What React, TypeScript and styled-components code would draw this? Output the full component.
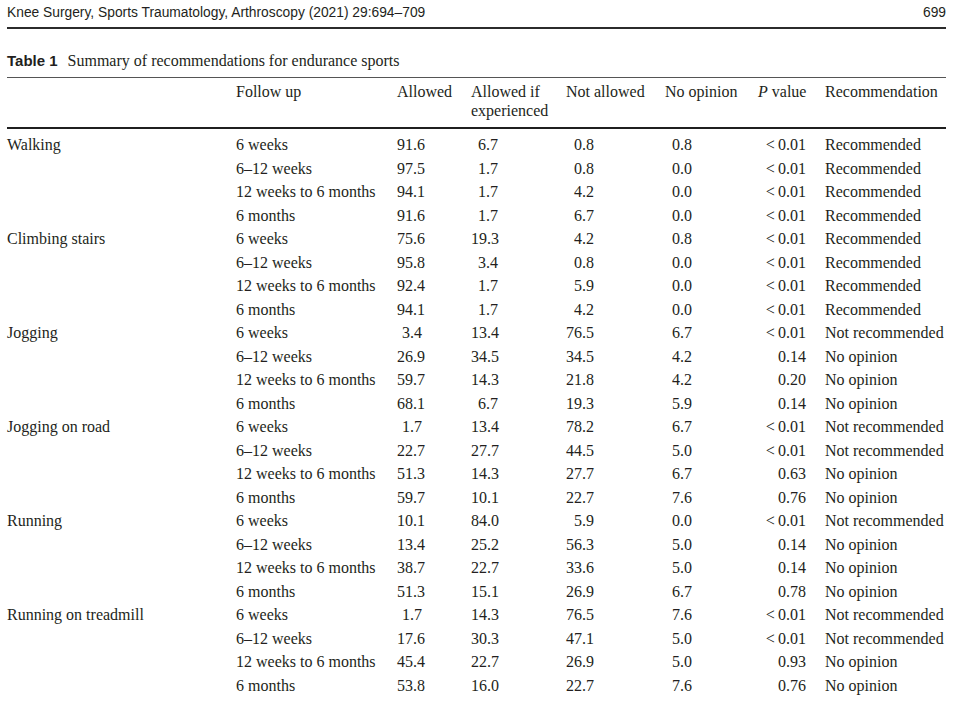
import React from "react";
import styled, { createGlobalStyle } from "styled-components";

const GlobalStyle = createGlobalStyle`
  html, body { margin: 0; padding: 0; background: #ffffff; }
  body { color: #231f20; }
`;

const SERIF = `"Liberation Serif", "Times New Roman", serif`;
const SANS = `"Liberation Sans", Arial, sans-serif`;

const COLS = "229px 161px 74px 95px 99px 93px 67px 1fr";

const Page = styled.div`
  width: 939px;
  padding: 0 12px 0 7px;
`;

const RunningHead = styled.header`
  display: flex;
  justify-content: space-between;
  align-items: baseline;
  font-family: ${SANS};
  font-size: 13.8px;
  line-height: 20px;
  padding-top: 3px;
  padding-bottom: 4px;
  border-bottom: 2px solid #2b2b2b;
`;

const Caption = styled.div`
  margin-top: 22px;
  font-family: ${SERIF};
  font-size: 16px;
  line-height: 20px;
  height: 26px;
`;

const CaptionLabel = styled.span`
  font-family: ${SANS};
  font-weight: 700;
  font-size: 15px;
  margin-right: 10px;
`;

const Table = styled.div`
  font-family: ${SERIF};
  font-size: 16px;
  border-top: 1px solid #555;
`;

const HeadRow = styled.div`
  display: grid;
  grid-template-columns: ${COLS};
  line-height: 19px;
  padding: 4px 0 7px;
  border-bottom: 2px solid #1f1f1f;
`;

const HeadCell = styled.div`
  white-space: nowrap;
`;

const Body = styled.div`
  padding-top: 4px;
`;

const Row = styled.div`
  display: grid;
  grid-template-columns: ${COLS};
  height: 23.52px;
  line-height: 23.52px;
`;

const Cell = styled.div<{ $pr?: number }>`
  white-space: nowrap;
  text-align: ${(p) => (p.$pr !== undefined ? "right" : "left")};
  padding-right: ${(p) => p.$pr ?? 0}px;
`;

const Italic = styled.i`
  font-style: italic;
`;

type R = [string, string, string, string, string, string, string];
type Group = { sport: string; rows: R[] };

const L = "<\u20090.01";

const DATA: Group[] = [
  {
    sport: "Walking",
    rows: [
      ["6 weeks", "91.6", "6.7", "0.8", "0.8", L, "Recommended"],
      ["6–12 weeks", "97.5", "1.7", "0.8", "0.0", L, "Recommended"],
      ["12 weeks to 6 months", "94.1", "1.7", "4.2", "0.0", L, "Recommended"],
      ["6 months", "91.6", "1.7", "6.7", "0.0", L, "Recommended"],
    ],
  },
  {
    sport: "Climbing stairs",
    rows: [
      ["6 weeks", "75.6", "19.3", "4.2", "0.8", L, "Recommended"],
      ["6–12 weeks", "95.8", "3.4", "0.8", "0.0", L, "Recommended"],
      ["12 weeks to 6 months", "92.4", "1.7", "5.9", "0.0", L, "Recommended"],
      ["6 months", "94.1", "1.7", "4.2", "0.0", L, "Recommended"],
    ],
  },
  {
    sport: "Jogging",
    rows: [
      ["6 weeks", "3.4", "13.4", "76.5", "6.7", L, "Not recommended"],
      ["6–12 weeks", "26.9", "34.5", "34.5", "4.2", "0.14", "No opinion"],
      ["12 weeks to 6 months", "59.7", "14.3", "21.8", "4.2", "0.20", "No opinion"],
      ["6 months", "68.1", "6.7", "19.3", "5.9", "0.14", "No opinion"],
    ],
  },
  {
    sport: "Jogging on road",
    rows: [
      ["6 weeks", "1.7", "13.4", "78.2", "6.7", L, "Not recommended"],
      ["6–12 weeks", "22.7", "27.7", "44.5", "5.0", L, "Not recommended"],
      ["12 weeks to 6 months", "51.3", "14.3", "27.7", "6.7", "0.63", "No opinion"],
      ["6 months", "59.7", "10.1", "22.7", "7.6", "0.76", "No opinion"],
    ],
  },
  {
    sport: "Running",
    rows: [
      ["6 weeks", "10.1", "84.0", "5.9", "0.0", L, "Not recommended"],
      ["6–12 weeks", "13.4", "25.2", "56.3", "5.0", "0.14", "No opinion"],
      ["12 weeks to 6 months", "38.7", "22.7", "33.6", "5.0", "0.14", "No opinion"],
      ["6 months", "51.3", "15.1", "26.9", "6.7", "0.78", "No opinion"],
    ],
  },
  {
    sport: "Running on treadmill",
    rows: [
      ["6 weeks", "1.7", "14.3", "76.5", "7.6", L, "Not recommended"],
      ["6–12 weeks", "17.6", "30.3", "47.1", "5.0", L, "Not recommended"],
      ["12 weeks to 6 months", "45.4", "22.7", "26.9", "5.0", "0.93", "No opinion"],
      ["6 months", "53.8", "16.0", "22.7", "7.6", "0.76", "No opinion"],
    ],
  },
];

// right padding for numeric columns: Allowed, Allowed if exp., Not allowed, No opinion, P value
const PR = [49, 68, 71, 66, 19];

export default function App() {
  return (
    <>
      <GlobalStyle />
      <Page>
        <RunningHead>
          <span>Knee Surgery, Sports Traumatology, Arthroscopy (2021) 29:694–709</span>
          <span>699</span>
        </RunningHead>
        <Caption>
          <CaptionLabel>Table 1</CaptionLabel>
          Summary of recommendations for endurance sports
        </Caption>
        <Table>
          <HeadRow>
            <HeadCell />
            <HeadCell>Follow up</HeadCell>
            <HeadCell>Allowed</HeadCell>
            <HeadCell>
              Allowed if
              <br />
              experienced
            </HeadCell>
            <HeadCell>Not allowed</HeadCell>
            <HeadCell>No opinion</HeadCell>
            <HeadCell>
              <Italic>P</Italic> value
            </HeadCell>
            <HeadCell>Recommendation</HeadCell>
          </HeadRow>
          <Body>
            {DATA.map((g) =>
              g.rows.map((r, i) => (
                <Row key={g.sport + i}>
                  <Cell>{i === 0 ? g.sport : ""}</Cell>
                  <Cell>{r[0]}</Cell>
                  {r.slice(1, 6).map((v, j) => (
                    <Cell key={j} $pr={PR[j]}>
                      {v}
                    </Cell>
                  ))}
                  <Cell>{r[6]}</Cell>
                </Row>
              ))
            )}
          </Body>
        </Table>
      </Page>
    </>
  );
}
